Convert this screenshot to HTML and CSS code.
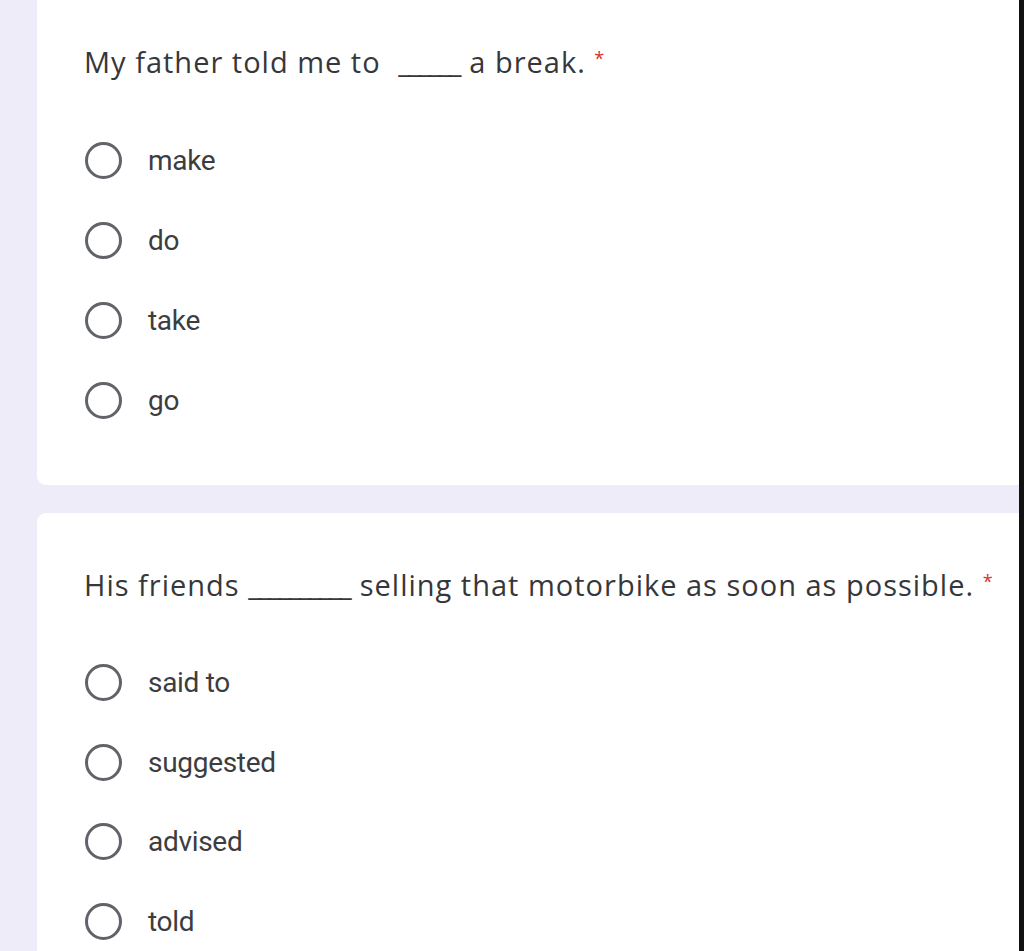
FILE: index.html
```html
<!DOCTYPE html>
<html lang="en">
<head>
<meta charset="utf-8">
<title>Quiz</title>
<link rel="stylesheet" href="styles.css">
</head>
<body>
<div class="page">
  <main class="form">
    <section class="card card-first">
      <h2 class="question">My father told me to <span class="blank blank-wide">______</span> a break. <span class="req">*</span></h2>
      <ul class="options">
        <li class="option"><span class="radio"></span><span class="label">make</span></li>
        <li class="option"><span class="radio"></span><span class="label">do</span></li>
        <li class="option"><span class="radio"></span><span class="label">take</span></li>
        <li class="option"><span class="radio"></span><span class="label">go</span></li>
      </ul>
    </section>
    <section class="card">
      <h2 class="question">His friends <span class="blank">__________</span> selling that motorbike as soon as possible. <span class="req">*</span></h2>
      <ul class="options">
        <li class="option"><span class="radio"></span><span class="label">said to</span></li>
        <li class="option"><span class="radio"></span><span class="label">suggested</span></li>
        <li class="option"><span class="radio"></span><span class="label">advised</span></li>
        <li class="option"><span class="radio"></span><span class="label">told</span></li>
      </ul>
    </section>
  </main>
  <div class="edge"></div>
</div>
</body>
</html>
```

FILE: styles.css
```css
html, body {
  margin: 0;
  padding: 0;
  height: 100%;
}
body {
  background: #efecf9;
  overflow: hidden;
}
.page {
  display: flex;
  height: 951px;
  overflow: hidden;
}
.form {
  flex: 1;
  min-width: 0;
  padding-left: 37px;
  overflow: hidden;
}
.edge {
  width: 5px;
  background: #111;
  flex: none;
}
.card {
  background: #fff;
  border-radius: 9px;
  margin-right: -12px;
  padding: 48px 47px 45px;
}
.card-first {
  margin-top: -10px;
  margin-bottom: 28px;
}
.question {
  margin: 0;
  font-family: "Open Sans", "Liberation Sans", sans-serif;
  font-weight: 400;
  font-size: 29px;
  line-height: 40px;
  color: #36373a;
  white-space: nowrap;
  letter-spacing: 1px;
}
.blank {
  letter-spacing: -2.6px;
  margin-right: 2px;
}
.blank-wide {
  margin-left: 9px;
}
.req {
  color: #d93025;
  font-size: 18px;
  vertical-align: 8px;
  letter-spacing: 0;
}
.options {
  list-style: none;
  margin: 38px 0 0;
  padding: 0;
}
.option {
  display: flex;
  align-items: center;
  height: 80px;
}
.card:not(.card-first) .option {
  height: 79.5px;
}
.radio {
  box-sizing: border-box;
  width: 37px;
  height: 37px;
  border: 3px solid #606368;
  border-radius: 50%;
  margin-left: 1px;
  flex: none;
}
.label {
  margin-left: 26px;
  font-family: Roboto, "Liberation Sans", sans-serif;
  font-size: 28px;
  color: #3c3d40;
  letter-spacing: -0.3px;
}
```
